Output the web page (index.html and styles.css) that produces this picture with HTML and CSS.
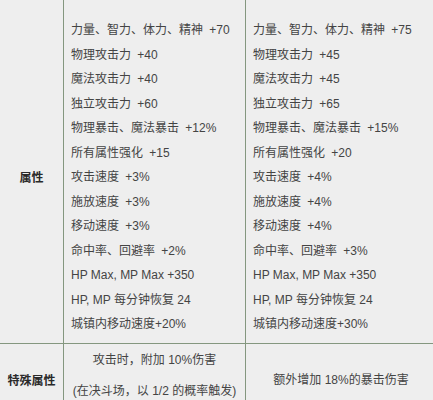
FILE: index.html
```html
<!DOCTYPE html>
<html lang="zh-CN">
<head>
<meta charset="utf-8">
<link rel="stylesheet" href="styles.css">
</head>
<body>
<div class="grid">
  <div class="cell label label-main">属性</div>
  <div class="cell list">
    <div>力量、智力、体力、精神 <span class="v">+70</span></div>
    <div>物理攻击力 <span class="v">+40</span></div>
    <div>魔法攻击力 <span class="v">+40</span></div>
    <div>独立攻击力 <span class="v">+60</span></div>
    <div>物理暴击、魔法暴击 <span class="v">+12%</span></div>
    <div>所有属性强化 <span class="v">+15</span></div>
    <div>攻击速度 <span class="v">+3%</span></div>
    <div>施放速度 <span class="v">+3%</span></div>
    <div>移动速度 <span class="v">+3%</span></div>
    <div>命中率、回避率 <span class="v">+2%</span></div>
    <div>HP Max, MP Max +350</div>
    <div>HP, MP 每分钟恢复 24</div>
    <div>城镇内移动速度+20%</div>
  </div>
  <div class="cell list">
    <div>力量、智力、体力、精神 <span class="v">+75</span></div>
    <div>物理攻击力 <span class="v">+45</span></div>
    <div>魔法攻击力 <span class="v">+45</span></div>
    <div>独立攻击力 <span class="v">+65</span></div>
    <div>物理暴击、魔法暴击 <span class="v">+15%</span></div>
    <div>所有属性强化 <span class="v">+20</span></div>
    <div>攻击速度 <span class="v">+4%</span></div>
    <div>施放速度 <span class="v">+4%</span></div>
    <div>移动速度 <span class="v">+4%</span></div>
    <div>命中率、回避率 <span class="v">+3%</span></div>
    <div>HP Max, MP Max +350</div>
    <div>HP, MP 每分钟恢复 24</div>
    <div>城镇内移动速度+30%</div>
  </div>
  <div class="cell label">特殊属性</div>
  <div class="cell special">
    <div class="sline">攻击时，附加 10%伤害</div>
    <div class="sline second">(在决斗场，以 1/2 的概率触发)</div>
  </div>
  <div class="cell special-single">额外增加 18%的暴击伤害</div>
</div>
</body>
</html>
```

FILE: styles.css
```css
html, body {
  margin: 0;
  padding: 0;
  overflow: hidden;
  background: #eeeeee;
}
body {
  width: 433px;
  height: 400px;
  font-family: "Liberation Sans", "Noto Sans CJK SC", sans-serif;
  font-size: 12px;
  color: #444444;
}
.grid {
  display: grid;
  grid-template-columns: 63px 181px 190px;
  grid-template-rows: 343px 70px;
  gap: 1px;
  background: #84977f;
  width: 436px;
}
.cell {
  background: #eeeeee;
}
.label {
  display: flex;
  align-items: center;
  justify-content: center;
  font-weight: bold;
  color: #2a2a2a;
}
.label-main {
  padding-top: 9px;
}
.list {
  padding: 18px 0 0 7px;
  line-height: 24.5px;
  white-space: nowrap;
}
.v {
  margin-left: 3px;
}
.special {
  padding-top: 6px;
  text-align: center;
  white-space: nowrap;
}
.sline {
  line-height: 20px;
}
.sline.second {
  margin-top: 11px;
}
.special-single {
  display: flex;
  align-items: center;
  justify-content: center;
  padding-bottom: 1px;
  white-space: nowrap;
}
```
